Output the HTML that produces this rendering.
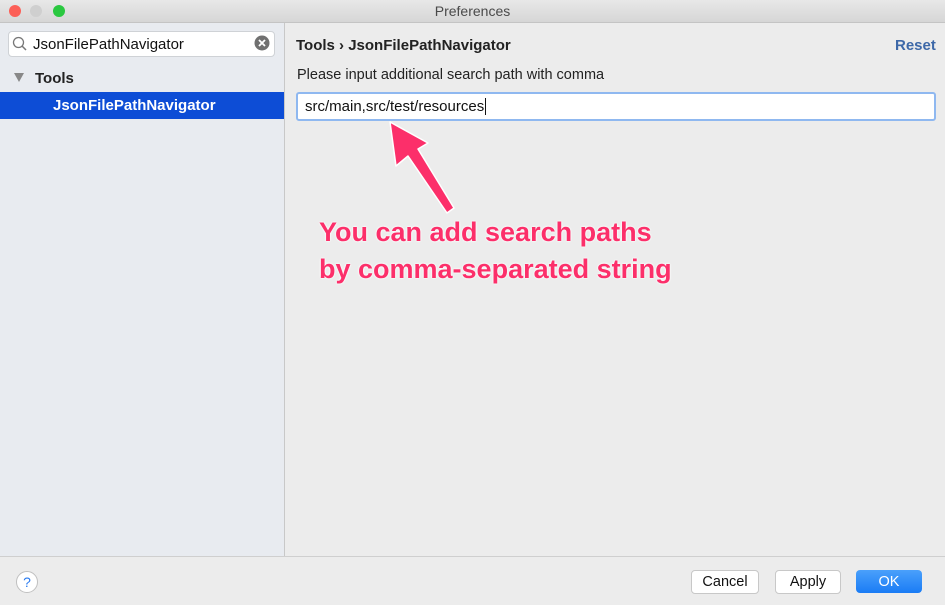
<!DOCTYPE html>
<html><head><style>
body{margin:0;width:945px;height:605px;overflow:hidden;background:#ececec;font-family:"Liberation Sans",sans-serif;position:relative}
.a{position:absolute}
</style></head><body>
<div class="a" style="left:0;top:0;width:945px;height:22px;background:linear-gradient(#e8e8e8,#d6d6d6);border-bottom:1px solid #c4c4c4"></div>
<div class="a" style="left:9px;top:5px;width:12px;height:12px;border-radius:50%;background:#fc5f57"></div>
<div class="a" style="left:30px;top:5px;width:12px;height:12px;border-radius:50%;background:#cfcfcf"></div>
<div class="a" style="left:53px;top:5px;width:12px;height:12px;border-radius:50%;background:#2ac840"></div>
<div class="a" style="left:0;top:3px;width:945px;text-align:center;font-size:14px;color:#4a4a4a">Preferences</div>
<div class="a" style="left:0;top:23px;width:284px;height:533px;background:#e8ebf0;border-right:1px solid #c8c8c8"></div>
<div class="a" style="left:8px;top:31px;width:265px;height:24px;background:#fff;border:1px solid #cfd2d6;border-radius:4px"></div>
<svg class="a" style="left:12px;top:36px" width="16" height="16"><circle cx="6.5" cy="6.5" r="5" fill="none" stroke="#777" stroke-width="1.3"/><line x1="10" y1="10" x2="14" y2="14" stroke="#777" stroke-width="1.5"/></svg>
<div class="a" style="left:33px;top:36px;font-size:15px;color:#111">JsonFilePathNavigator</div>
<svg class="a" style="left:254px;top:35px" width="16" height="16"><circle cx="8" cy="8" r="7.5" fill="#707070"/><path d="M5 5L11 11M11 5L5 11" stroke="#fff" stroke-width="1.8"/></svg>
<div class="a" style="left:14px;top:73px;width:0;height:0;border-left:5px solid transparent;border-right:5px solid transparent;border-top:9px solid #888"></div>
<div class="a" style="left:35px;top:70px;font-size:15px;font-weight:bold;color:#222">Tools</div>
<div class="a" style="left:0;top:92px;width:284px;height:27px;background:#0d4dd6"></div>
<div class="a" style="left:53px;top:97px;font-size:15px;font-weight:bold;color:#fff">JsonFilePathNavigator</div>
<div class="a" style="left:296px;top:37px;font-size:15px;font-weight:bold;color:#222">Tools › JsonFilePathNavigator</div>
<div class="a" style="left:895px;top:37px;font-size:15px;font-weight:bold;color:#3d68a8">Reset</div>
<div class="a" style="left:297px;top:67px;font-size:14.5px;color:#222">Please input additional search path with comma</div>
<div class="a" style="left:296px;top:92px;width:636px;height:25px;background:#fff;border:2px solid #8fb8f0;border-radius:3px"></div>
<div class="a" style="left:305px;top:98px;font-size:15px;color:#111">src/main,src/test/resources<span style="border-left:1px solid #111;margin-left:1px"></span></div>
<svg class="a" style="left:0;top:0" width="945" height="605"><polygon points="390,122 428,143 418,149 454,208 447,213 408,156 396,166" fill="#fc2f6a" stroke="#fff" stroke-width="1.5" stroke-linejoin="round"/></svg>
<div class="a" style="left:319px;top:214px;font-size:27px;font-weight:bold;color:#fc2f6a;line-height:37px;text-shadow:0 0 2px #fff,0 0 2px #fff">You can add search paths<br>by comma-separated string</div>
<div class="a" style="left:0;top:556px;width:945px;height:1px;background:#cfcfcf"></div>
<div class="a" style="left:16px;top:571px;width:20px;height:20px;border-radius:50%;background:#fff;border:1px solid #c0c0c0;text-align:center;font-size:14px;line-height:20px;color:#2a7bf0">?</div>
<div class="a" style="left:691px;top:570px;width:66px;height:22px;background:#fff;border:1px solid #c8c8c8;border-radius:4px;text-align:center;font-size:14.5px;line-height:23px;color:#111">Cancel</div>
<div class="a" style="left:775px;top:570px;width:64px;height:22px;background:#fff;border:1px solid #c8c8c8;border-radius:4px;text-align:center;font-size:14.5px;line-height:23px;color:#111">Apply</div>
<div class="a" style="left:856px;top:570px;width:66px;height:23px;background:linear-gradient(#4aa0fb,#1a7cf5);border-radius:4px;text-align:center;font-size:14.5px;line-height:24px;color:#fff">OK</div>
</body></html>
